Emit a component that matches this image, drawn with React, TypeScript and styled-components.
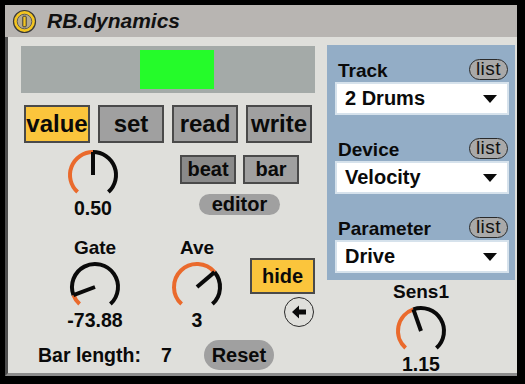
import React from "react";
import styled, { createGlobalStyle } from "styled-components";

const Global = createGlobalStyle`
  html, body { margin: 0; padding: 0; background: #000; }
  body { font-family: "Liberation Sans", Arial, sans-serif; width: 525px; height: 384px; overflow: hidden; }
  * { box-sizing: border-box; }
`;

const ORANGE = "#ea6a2c";
const YELLOW = "#fbc53c";

const Window = styled.div`
  margin: 5px 0 0 5px;
  width: 512px;
  display: flex;
  flex-direction: column;
`;

const TitleBar = styled.div`
  height: 32px;
  background: #b8b5b2;
  display: flex;
  align-items: center;
  padding-left: 7px;
  gap: 10px;
`;

const Title = styled.div`
  font-weight: bold;
  font-style: italic;
  font-size: 21px;
  color: #111;
  margin-top: -1px;
`;

const Body = styled.div`
  height: 339px;
  background: #dfdfdb;
  border-left: 3px solid #4e4e4e;
  border-bottom: 3px solid #8c8c8c;
  display: flex;
  padding: 8px 0 0 13px;
  gap: 12px;
`;

const LeftCol = styled.div`
  width: 294px;
  display: flex;
  flex-direction: column;
`;

const Display = styled.div`
  margin-top: 1px;
  height: 47px;
  background: #a4aaa8;
  padding: 4px 0 0 119px;
`;

const Meter = styled.div`
  width: 74px;
  height: 39px;
  background: #25fb2a;
`;

const ModeRow = styled.div`
  margin-top: 12px;
  padding-left: 3px;
  display: flex;
  gap: 8px;
`;

const ModeButton = styled.div<{ $on?: boolean }>`
  width: 66px;
  height: 38px;
  border: 2px solid #4a4a4a;
  background: ${(p) => (p.$on ? YELLOW : "#a0a0a0")};
  font-weight: bold;
  font-size: 24px;
  color: #0a0a0a;
  display: flex;
  align-items: center;
  justify-content: center;
  padding-bottom: 1px;
`;

const MidRow = styled.div`
  height: 96px;
  display: flex;
  align-items: flex-start;
`;

const KnobCol = styled.div<{ $ml: number; $mt?: number }>`
  width: 60px;
  margin-left: ${(p) => p.$ml}px;
  margin-top: ${(p) => p.$mt ?? 0}px;
  display: flex;
  flex-direction: column;
  align-items: center;
`;

const KnobLabel = styled.div`
  font-weight: bold;
  font-size: 19px;
  line-height: 18px;
  height: 18px;
  color: #0a0a0a;
  margin-bottom: 3px;
  white-space: nowrap;
`;

const KnobValue = styled.div`
  font-weight: bold;
  font-size: 19.5px;
  line-height: 16px;
  height: 16px;
  margin-top: -2px;
  color: #0a0a0a;
  white-space: nowrap;
`;

const EditGroup = styled.div`
  margin-left: 57px;
  margin-top: 12px;
  display: flex;
  flex-direction: column;
  align-items: center;
`;

const BeatRow = styled.div`
  display: flex;
  gap: 7px;
`;

const SmallButton = styled.div<{ $on?: boolean }>`
  width: 56px;
  height: 29px;
  border: 2px solid #4a4a4a;
  background: ${(p) => (p.$on ? "#8a8a8a" : "#a0a0a0")};
  font-weight: bold;
  font-size: 20px;
  color: #0a0a0a;
  display: flex;
  align-items: center;
  justify-content: center;
  padding-bottom: 1px;
`;

const Pill = styled.div<{ $w: number; $h: number }>`
  width: ${(p) => p.$w}px;
  height: ${(p) => p.$h}px;
  border-radius: ${(p) => p.$h / 2}px;
  background: #a0a0a0;
  font-weight: bold;
  font-size: 20px;
  color: #0a0a0a;
  display: flex;
  align-items: center;
  justify-content: center;
`;

const EditorPill = styled(Pill)`
  margin-top: 10px;
`;

const LowRow = styled.div`
  height: 101px;
  display: flex;
  align-items: flex-start;
`;

const HideGroup = styled.div`
  margin-left: 23px;
  margin-top: 19px;
  display: flex;
  flex-direction: column;
  align-items: flex-end;
`;

const HideButton = styled.div`
  width: 65px;
  height: 36px;
  border: 2px solid #4a4a4a;
  background: ${YELLOW};
  font-weight: bold;
  font-size: 20px;
  color: #0a0a0a;
  display: flex;
  align-items: center;
  justify-content: center;
`;

const ArrowButton = styled.div`
  width: 30px;
  height: 30px;
  margin: 3px 1px 0 0;
  border-radius: 50%;
  border: 1.5px solid #2a2a2a;
  display: flex;
  align-items: center;
  justify-content: center;
`;

const BarRow = styled.div`
  display: flex;
  align-items: center;
  height: 30px;
  padding-left: 17px;
  font-weight: bold;
  font-size: 19.5px;
  color: #0a0a0a;
`;

const BarValue = styled.span`
  margin-left: 20px;
  width: 43px;
`;

const RightCol = styled.div`
  width: 188px;
  display: flex;
  flex-direction: column;
  align-items: center;
`;

const Panel = styled.div`
  width: 188px;
  background: #93adc6;
  padding: 13px 6px 7px 8px;
  display: flex;
  flex-direction: column;
  gap: 22px;
`;

const Field = styled.div`
  display: flex;
  flex-direction: column;
  gap: 2px;
`;

const FieldHeader = styled.div`
  height: 22px;
  display: flex;
  align-items: center;
  justify-content: space-between;
  padding: 0 1px 0 3px;
`;

const FieldLabel = styled.div`
  font-weight: bold;
  font-size: 19px;
  color: #0a0a0a;
  margin-top: 3px;
`;

const ListPill = styled.div`
  width: 39px;
  height: 21px;
  border-radius: 11px;
  border: 1.5px solid #2a2a2a;
  background: #a9a9a9;
  font-size: 19px;
  letter-spacing: 0.5px;
  color: #111;
  display: flex;
  align-items: center;
  justify-content: center;
  padding-bottom: 1px;
`;

const Dropdown = styled.div`
  height: 33px;
  background: #fff;
  border: 2px solid #d6e2ec;
  display: flex;
  align-items: center;
  justify-content: space-between;
  padding: 0 10px 0 8px;
  font-weight: bold;
  font-size: 20px;
  color: #0a0a0a;
`;

const Caret = styled.div`
  width: 0;
  height: 0;
  border-left: 7px solid transparent;
  border-right: 7px solid transparent;
  border-top: 8px solid #0a0a0a;
`;

const SensCol = styled.div`
  margin-top: 3px;
  display: flex;
  flex-direction: column;
  align-items: center;
`;

function polar(cx: number, cy: number, r: number, deg: number) {
  const a = (deg * Math.PI) / 180;
  return [cx + r * Math.sin(a), cy - r * Math.cos(a)];
}

function arc(cx: number, cy: number, r: number, a0: number, a1: number) {
  const [x0, y0] = polar(cx, cy, r, a0);
  const [x1, y1] = polar(cx, cy, r, a1);
  const large = a1 - a0 > 180 ? 1 : 0;
  return `M${x0.toFixed(2)} ${y0.toFixed(2)} A${r} ${r} 0 ${large} 1 ${x1.toFixed(2)} ${y1.toFixed(2)}`;
}

const Dial: React.FC<{ pos: number }> = ({ pos }) => {
  const c = 27;
  const r = 23;
  const start = -138;
  const end = 138;
  const a = start + (end - start) * pos;
  const [nx, ny] = polar(c, c, r, a);
  return (
    <svg width="54" height="54" viewBox="0 0 54 54">
      {a > start && <path d={arc(c, c, r, start, a)} stroke={ORANGE} strokeWidth="4" fill="none" />}
      {a < end && <path d={arc(c, c, r, a, end)} stroke="#0a0a0a" strokeWidth="4" fill="none" />}
      <line x1={c} y1={c} x2={nx} y2={ny} stroke="#0a0a0a" strokeWidth="4" />
    </svg>
  );
};

const PowerIcon = () => (
  <svg width="25" height="25" viewBox="0 0 25 25">
    <circle cx="12.5" cy="12.5" r="11" fill="#f3c520" stroke="#3a3a3a" strokeWidth="1.2" />
    <circle cx="12.5" cy="12.5" r="7.3" fill="#b3aa93" stroke="#5a5a5a" strokeWidth="1" />
    <rect x="10.8" y="7.2" width="3.4" height="10.6" rx="0.8" fill="#f3c520" stroke="#3a3a3a" strokeWidth="1" />
  </svg>
);

const ArrowIcon = () => (
  <svg width="16" height="14" viewBox="0 0 16 14">
    <path d="M1 7 L8 0.5 V4.5 H15 V9.5 H8 V13.5 Z" fill="#0a0a0a" />
  </svg>
);

const fields = [
  { label: "Track", value: "2 Drums" },
  { label: "Device", value: "Velocity" },
  { label: "Parameter", value: "Drive" },
];

export default function App() {
  return (
    <>
      <Global />
      <Window>
        <TitleBar>
          <PowerIcon />
          <Title>RB.dynamics</Title>
        </TitleBar>
        <Body>
          <LeftCol>
            <Display>
              <Meter />
            </Display>
            <ModeRow>
              <ModeButton $on>value</ModeButton>
              <ModeButton>set</ModeButton>
              <ModeButton>read</ModeButton>
              <ModeButton>write</ModeButton>
            </ModeRow>
            <MidRow>
              <KnobCol $ml={42} $mt={5}>
                <Dial pos={0.5} />
                <KnobValue>0.50</KnobValue>
              </KnobCol>
              <EditGroup>
                <BeatRow>
                  <SmallButton $on>beat</SmallButton>
                  <SmallButton>bar</SmallButton>
                </BeatRow>
                <EditorPill $w={81} $h={21}>editor</EditorPill>
              </EditGroup>
            </MidRow>
            <LowRow>
              <KnobCol $ml={44}>
                <KnobLabel>Gate</KnobLabel>
                <Dial pos={0.1} />
                <KnobValue>-73.88</KnobValue>
              </KnobCol>
              <KnobCol $ml={42}>
                <KnobLabel>Ave</KnobLabel>
                <Dial pos={0.68} />
                <KnobValue>3</KnobValue>
              </KnobCol>
              <HideGroup>
                <HideButton>hide</HideButton>
                <ArrowButton>
                  <ArrowIcon />
                </ArrowButton>
              </HideGroup>
            </LowRow>
            <BarRow>
              <span>Bar length:</span>
              <BarValue>7</BarValue>
              <Pill $w={70} $h={30}>Reset</Pill>
            </BarRow>
          </LeftCol>
          <RightCol>
            <Panel>
              {fields.map((f) => (
                <Field key={f.label}>
                  <FieldHeader>
                    <FieldLabel>{f.label}</FieldLabel>
                    <ListPill>list</ListPill>
                  </FieldHeader>
                  <Dropdown>
                    <span>{f.value}</span>
                    <Caret />
                  </Dropdown>
                </Field>
              ))}
            </Panel>
            <SensCol>
              <KnobLabel>Sens1</KnobLabel>
              <Dial pos={0.43} />
              <KnobValue>1.15</KnobValue>
            </SensCol>
          </RightCol>
        </Body>
      </Window>
    </>
  );
}
